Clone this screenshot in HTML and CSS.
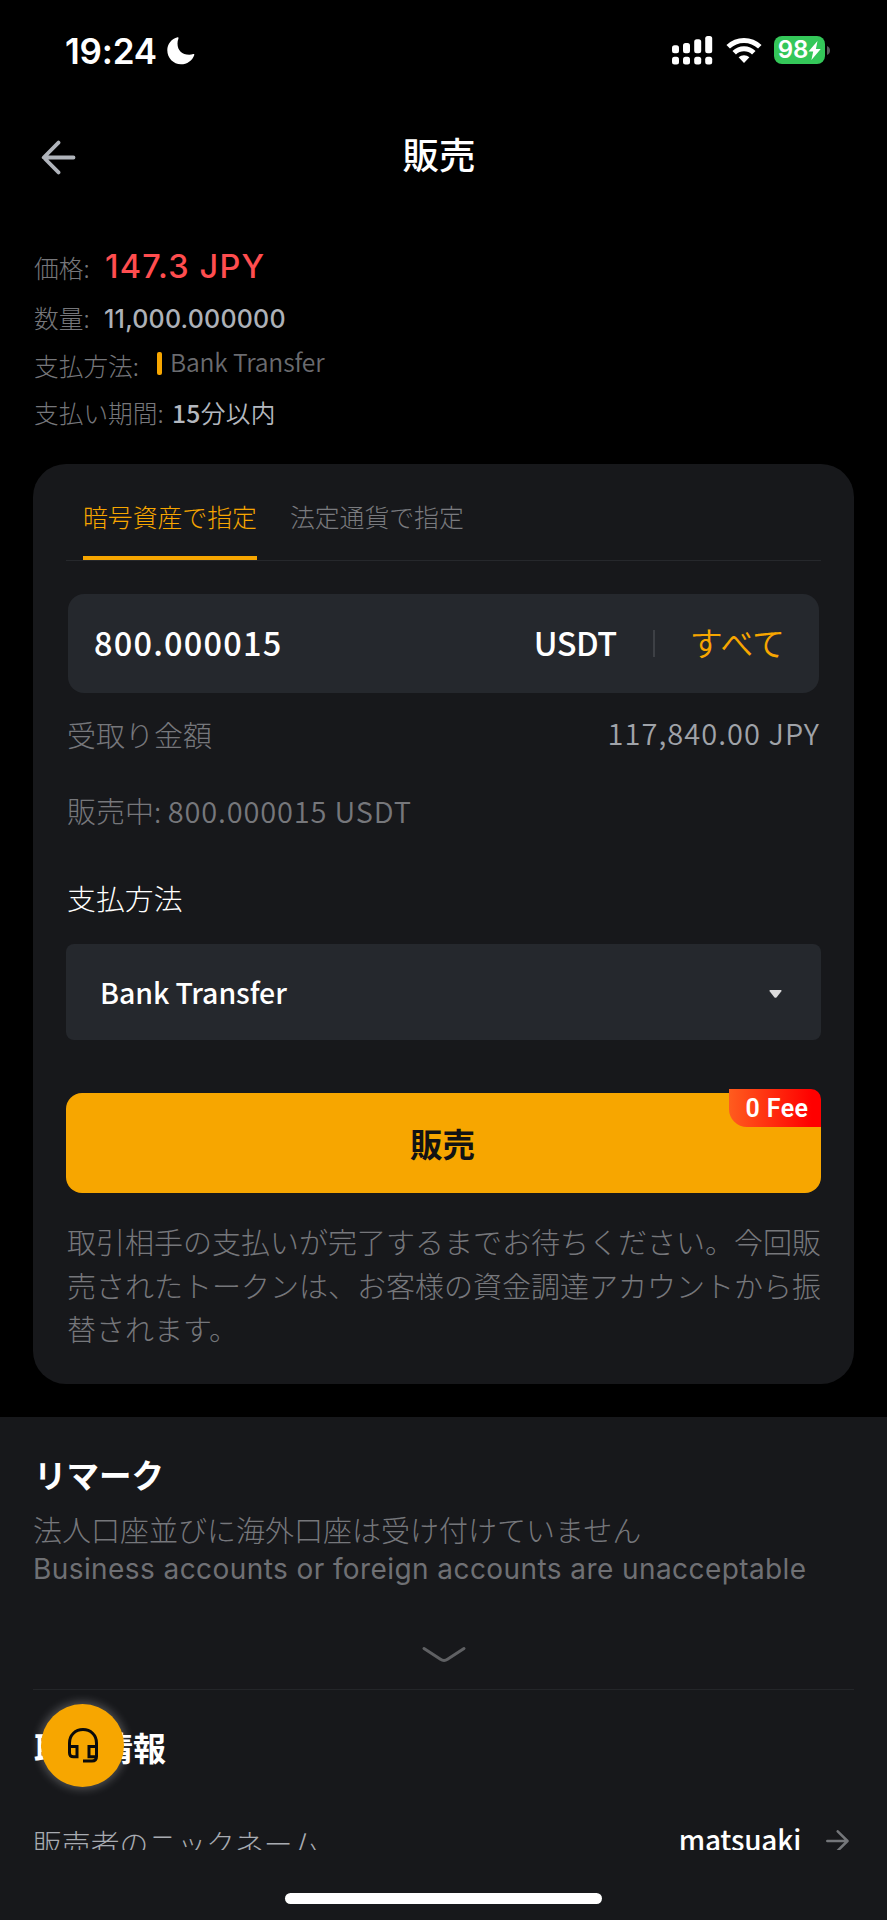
FILE: index.html
```html
<!DOCTYPE html>
<html lang="ja">
<head>
<meta charset="utf-8">
<title>販売</title>
<link rel="stylesheet" href="styles.css">
</head>
<body>
<div class="screen">
  <div class="viewport">
    <header class="status">
      <div class="status-left">
        <span class="clock">19:24</span>
        <svg class="moon" width="28" height="28" viewBox="0 0 28 28"><path d="M10.6 0.3C4.600 1.700 0.300 7 0.300 13.300 0.300 21 6.300 27.300 14 27.300c6 0 11.300-3.500 13.300-9.300 0.200-0.800-0.400-1.300-1.100-1-1.200 0.500-2.500 0.700-4 0.700-7.200 0-11.700-4.400-11.700-11.300 0-1.700 0.300-3.200 0.900-4.700C11.700 0.700 11.300 0.100 10.600 0.300z" fill="#fff"/></svg>
      </div>
      <div class="status-right">
        <svg class="signal" width="41" height="29" viewBox="0 0 41 29" fill="#fff">
          <rect x="0" y="9.300" width="7" height="8" rx="2.500"/><rect x="11" y="7" width="7" height="10.300" rx="2.500"/><rect x="22.200" y="3.300" width="7" height="14" rx="2.500"/><rect x="33.200" y="0" width="7" height="17.300" rx="2.500"/>
          <rect x="0" y="20.700" width="7" height="7.700" rx="2.500"/><rect x="11" y="20.700" width="7" height="7.700" rx="2.500"/><rect x="22.200" y="20.700" width="7" height="7.700" rx="2.500"/><rect x="33.200" y="20.700" width="7" height="7.700" rx="2.500"/>
        </svg>
        <svg class="wifi" width="36" height="27" viewBox="0 0 36 27">
          <path d="M2.200 9.800C11 1.300 25 1.300 33.800 9.800M8.200 15.800c5.500-5.300 14.100-5.300 19.600 0" fill="none" stroke="#fff" stroke-width="5"/>
          <path d="M12.600 20.300c3-2.900 7.800-2.900 10.800 0L18 26z" fill="#fff"/>
        </svg>
        <div class="battery">98<svg width="13" height="19" viewBox="0 0 13 19"><path d="M9.500 0 0.500 10.600h4.700L3.400 19 12.700 8H7.900z" fill="#fff"/></svg></div>
        <svg class="nub" width="4" height="9" viewBox="0 0 4 9"><path d="M0 0c4 1 4 8 0 9z" fill="#5a5a5c"/></svg>
      </div>
    </header>
    <nav class="nav">
      <svg class="back" width="35" height="35" viewBox="0 0 35 35" fill="none" stroke="#b0b4bb" stroke-width="3.800" stroke-linecap="round" stroke-linejoin="round"><path d="M32.500 17.500H3M17.500 2.600 2.700 17.500 17.500 32.400"/></svg>
      <h1 class="title">販売</h1>
      <span class="nav-end"></span>
    </nav>
    <section class="info">
      <div class="row row-price"><span class="label">価格:</span><span class="price">147.3 JPY</span></div>
      <div class="row row-qty"><span class="label">数量:</span><span class="qty">11,000.000000</span></div>
      <div class="row row-pay"><span class="label">支払方法:</span><span class="bar"></span><span class="pay">Bank Transfer</span></div>
      <div class="row row-term"><span class="label">支払い期間:</span><span class="term"><b>15</b>分以内</span></div>
    </section>
    <section class="card">
      <div class="tabs"><span class="tab active">暗号資産で指定</span><span class="tab">法定通貨で指定</span></div>
      <div class="amount"><span class="value">800.000015</span><span class="unit">USDT</span><span class="split"></span><span class="all">すべて</span></div>
      <div class="receive"><span>受取り金額</span><span class="sum">117,840.00 JPY</span></div>
      <div class="selling">販売中: <span class="stock">800.000015 USDT</span></div>
      <div class="method-title">支払方法</div>
      <div class="select"><span>Bank Transfer</span><svg width="13" height="8" viewBox="0 0 13 8"><path d="M1.200 0h10.600q1.300.3.400 1.600L7.700 7.300q-1.200 1-2.400 0L.8 1.600Q-.1.300 1.200 0z" fill="#dcdcdc"/></svg></div>
      <div class="submit"><span>販売</span><span class="fee">0 Fee</span></div>
      <p class="note">取引相手の支払いが完了するまでお待ちください。今回販売されたトークンは、お客様の資金調達アカウントから振替されます。</p>
    </section>
    <section class="sheet">
      <h2 class="heading">リマーク</h2>
      <p class="remark-ja">法人口座並びに海外口座は受け付けていません</p>
      <p class="remark-en">Business accounts or foreign accounts are unacceptable</p>
      <svg class="chevron" width="44" height="17" viewBox="0 0 44 17"><path d="M2 2.500 18.500 13.300q3.500 2.200 7 0L42 2.500" fill="none" stroke="#5f6063" stroke-width="3" stroke-linecap="round"/></svg>
      <h2 class="heading trade">取引情報</h2>
      <div class="seller"><span class="seller-label">販売者のニックネーム</span><span class="seller-name">matsuaki</span><svg class="go" width="23" height="22" viewBox="0 0 23 22" fill="none" stroke="#74767a" stroke-width="2.500" stroke-linecap="round" stroke-linejoin="round"><path d="M1.300 11h20M11.700 1.300 21.500 11 11.700 20.700"/></svg></div>
    </section>
  </div>
  <footer class="home"><span class="home-bar"></span></footer>
  <div class="support"><svg width="30" height="35" viewBox="0 0 30 35" fill="none" stroke="#0b0b0b" stroke-width="3"><path d="M1.500 18.500V15C1.500 7 7.500 1.500 15 1.500S28.500 7 28.500 15v13.500q0 4.500-4.500 4.500h-9M1.500 18.500H9v10.300H5.500q-4 0-4-4zM28.500 18.500H21v10.300h7.500"/></svg></div>
</div>
</body>
</html>
```
FILE: styles.css
```css
* { box-sizing: border-box; }
body {
  margin: 0;
  background: #000;
  color: #fff;
  font-family: "Noto Sans CJK JP", sans-serif;
  font-weight: 300;
}
h1, h2, p { margin: 0; }
svg { display: block; flex: none; }
.screen { position: relative; width: 887px; height: 1920px; display: flex; flex-direction: column; white-space: nowrap; overflow: hidden; }
.viewport { height: 1850px; overflow: hidden; display: flex; flex-direction: column; }

.status { height: 101px; flex: none; display: flex; justify-content: space-between; padding: 0 56px 0 65px; }
.status-left, .status-right { display: flex; align-items: center; }
.clock { font: 600 35px/40px Inter, sans-serif; width: 102px; letter-spacing: -0.200px; }
.status-right { padding-bottom: 1px; }
.wifi { margin-left: 13px; }
.battery { margin-left: 12px; width: 51px; height: 28px; border-radius: 8px; background: #34c759; display: flex; align-items: center; justify-content: center; font: 600 24px/28px Inter, sans-serif; }
.nub { margin-left: 2px; }

.nav { height: 142px; flex: none; display: flex; align-items: flex-start; justify-content: space-between; padding: 28px 50px 0 41px; }
.back { margin-top: 11px; }
.title { font-size: 36.500px; line-height: 50px; font-weight: 500; }
.nav-end { width: 35px; }

.info { flex: none; padding: 0 34px; color: #76777b; font-size: 24.700px; }
.row { display: flex; align-items: center; }
.row-price { height: 48px; }
.row-qty { height: 52px; }
.row-pay { height: 44px; }
.row-term { height: 49px; }
.label { white-space: pre; }
.row-price .label, .row-qty .label { width: 70px; }
.price { font: 500 32.500px/40px Inter, sans-serif; color: #ff4d4f; letter-spacing: 1.200px; padding-left: 1px; }
.qty { font: 500 25px/40px Inter, sans-serif; color: #adb1b8; letter-spacing: 0.200px; padding-top: 3px; }
.row-pay .label { width: 123px; }
.bar { width: 5px; height: 23px; border-radius: 2px; background: #f7a600; margin-bottom: 3px; }
.pay { margin-left: 8px; margin-bottom: 8px; font-weight: 350; color: #6a6b6f; letter-spacing: -0.150px; }
.row-term .label { width: 138px; }
.term { color: #b4b8bf; font-weight: 350; letter-spacing: 0.300px; }
.term b { font-weight: 500; }

.card { flex: none; margin: 28px 33px 0; padding: 0 33px 34px; height: 920px; background: #17181b; border-radius: 33px; }
.tabs { display: flex; gap: 33px; height: 97px; padding-left: 17px; border-bottom: 1px solid #26282c; color: #7a7b7f; font-size: 24.850px; }
.tab { padding-top: 27px; line-height: 50px; height: 96px; }
.active { color: #f7a600; border-bottom: 4px solid #f7a600; }
.amount { margin: 33px 2px 0; height: 99px; padding: 0 34px 4px 26px; border-radius: 16px; background: #25282d; display: flex; align-items: center; }
.value, .unit { font-size: 32.500px; font-weight: 500; letter-spacing: 1.200px; }
.unit { margin-left: auto; letter-spacing: -0.500px; }
.split { width: 2px; height: 27px; background: #3d4045; margin: 4px 35px 0 36px; }
.all { font-size: 33px; font-weight: 350; color: #f7a600; }
.receive { height: 81px; padding: 0 1px; display: flex; align-items: center; justify-content: space-between; font-size: 29px; color: #76777b; }
.sum { color: #a0a3a9; font-weight: 350; letter-spacing: 1.050px; padding-bottom: 3px; }
.selling { line-height: 72px; padding-left: 1px; font-size: 29px; color: #76777b; }
.stock { font-weight: 350; letter-spacing: 0.850px; }
.method-title { height: 98px; line-height: 103px; padding-left: 1px; font-size: 28.900px; }
.select { height: 96px; padding: 0 39px 0 34px; border-radius: 8px; background: #25282d; display: flex; align-items: center; justify-content: space-between; font-size: 28.500px; font-weight: 500; }
.select span { padding-bottom: 2px; letter-spacing: -0.100px; }
.select svg { margin-top: 4px; }
.submit { position: relative; margin-top: 53px; height: 100px; padding: 0 2px 2px 0; border-radius: 16px; background: #f7a600; display: flex; align-items: center; justify-content: center; color: #121214; font-size: 32.500px; font-weight: 700; }
.fee { position: absolute; right: 0; top: -4px; width: 92px; height: 38px; padding-left: 4px; border-radius: 0 10px 0 18px; background: linear-gradient(90deg, #ff5c1e, #f00 90%); color: #fff; text-align: center; font: 600 25px/40px Roboto, sans-serif; letter-spacing: 0.400px; }
.note { margin-top: 27px; width: 757px; white-space: normal; font-size: 29px; line-height: 43.700px; padding-left: 1px; color: #76777b; }

.sheet { flex: none; margin-top: 33px; padding: 32px 33px 0; height: 460px; background: #17181b; }
.heading { font-size: 32.500px; line-height: 50px; font-weight: 700; padding-left: 1px; }
.remark-ja { margin-top: 11px; font-size: 29px; line-height: 38px; color: #76777b; }
.remark-en { margin-top: 2px; font: 400 28px/38px Inter, sans-serif; color: #6f7074; letter-spacing: 0.420px; }
.chevron { margin: 58px auto 0; }
.trade { margin-top: 26px; padding-top: 32px; border-top: 1px solid #242629; font-size: 33px; }
.seller { margin-top: 46px; height: 50px; display: flex; padding-right: 5px; font-size: 28.850px; line-height: 50px; }
.seller-label { color: #a8abb1; }
.seller-name { margin-left: auto; margin-top: -4px; font-size: 28px; font-weight: 500; letter-spacing: -0.200px; }
.go { margin: 12px 0 0 25px; }

.home { height: 70px; background: #17181b; display: flex; justify-content: center; padding-top: 43px; }
.home-bar { width: 317px; height: 11px; border-radius: 6px; background: #fff; }
.support { position: absolute; left: 41px; top: 1704px; width: 83px; height: 83px; border-radius: 50%; background: #f7a600; box-shadow: 0 0 10px 2px rgba(255, 255, 255, 0.260); display: flex; align-items: center; justify-content: center; }
```
